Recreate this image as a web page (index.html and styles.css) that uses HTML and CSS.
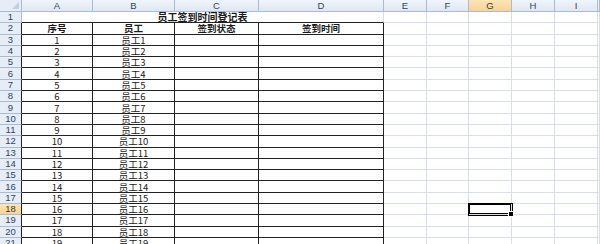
FILE: index.html
```html
<!DOCTYPE html>
<html lang="zh-CN">
<head>
  <meta charset="UTF-8" />
  <title>员工签到时间登记表</title>
  <link rel="stylesheet" href="styles.css">
</head>
<body>
  <div class="sheet" id="sheet"></div>

  <script>
    const sheetEl = document.getElementById("sheet");
    const cols = ["A", "B", "C", "D", "E", "F", "G", "H", "I", ""];
    const selCol = "G";
    const selRow = 18;

    function cell(cls, text) {
      const el = document.createElement("div");
      el.className = "cell " + cls;
      if (text !== undefined) {
        const span = document.createElement("span");
        span.textContent = text;
        el.appendChild(span);
      }
      sheetEl.appendChild(el);
      return el;
    }

    // column headers
    cell("corner");
    cols.forEach(c => cell("col-head" + (c === selCol ? " active" : ""), c));

    for (let r = 1; r <= 21; r++) {
      cell("row-head" + (r === selRow ? " active" : "") + (r >= 2 ? " edge" : ""), r);

      if (r === 1) {
        cell("title", "员工签到时间登记表");
      } else if (r === 2) {
        cell("t head", "序号");
        cell("t head", "员工");
        cell("t head", "签到状态");
        cell("t head", "签到时间");
      } else {
        cell("t", r - 2);
        cell("t", "员工" + (r - 2));
        cell("t");
        cell("t");
      }

      cols.slice(4).forEach(c => {
        const el = cell("blank");
        if (c === selCol && r === selRow) el.classList.add("selected");
      });
    }
  </script>
</body>
</html>
```

FILE: styles.css
```css
:root {
  --grid: #d8dfea;
  --head-bg: #e6edf7;
  --head-line: #a9bcd4;
  --head-text: #2f4463;
  --active-bg: #f8d48f;
}

body {
  margin: 0;
  background: #fff;
  font-family: "Noto Sans CJK SC", "Liberation Sans", sans-serif;
  overflow: hidden;
}

.sheet {
  display: grid;
  grid-template-columns: 22px 71px 82px 84px 125px 43px 42px 43px 43px 43px 1fr;
  grid-template-rows: 12px;
  grid-auto-rows: 11.3px;
  width: 600px;
}

.cell {
  box-sizing: border-box;
  display: flex;
  align-items: center;
  justify-content: center;
  border-right: 1px solid var(--grid);
  border-bottom: 1px solid var(--grid);
  font-size: 9.5px;
  line-height: 10px;
  color: #1a1a1a;
  white-space: nowrap;
  position: relative;
}

.cell span {
  display: block;
  height: 10px;
  line-height: 10px;
}

.corner,
.col-head,
.row-head {
  background: var(--head-bg);
  border-color: var(--head-line);
  color: var(--head-text);
  font-family: "Liberation Sans", sans-serif;
}

.col-head {
  background: linear-gradient(#f1f5fb, #dfe7f3);
}

.row-head.edge {
  border-right-color: #222;
}

.col-head.active,
.row-head.active {
  background: linear-gradient(#fbe4b8, var(--active-bg));
  color: #3a3a2a;
}

.corner::after {
  content: "";
  position: absolute;
  right: 2px;
  bottom: 2px;
  border-left: 7px solid transparent;
  border-bottom: 7px solid #c3cfdf;
}

.title {
  grid-column: span 4;
  font-weight: bold;
  font-size: 10px;
  border-bottom-color: #222;
}

.t {
  border-right-color: #222;
  border-bottom-color: #222;
}

.t.head {
  font-weight: bold;
}

.selected {
  box-shadow: 0 0 0 1px #000, inset 0 0 0 1px #000;
  z-index: 1;
}

.selected::after {
  content: "";
  position: absolute;
  right: -3px;
  bottom: -3px;
  width: 4px;
  height: 4px;
  background: #000;
  border: 1px solid #fff;
}
```
